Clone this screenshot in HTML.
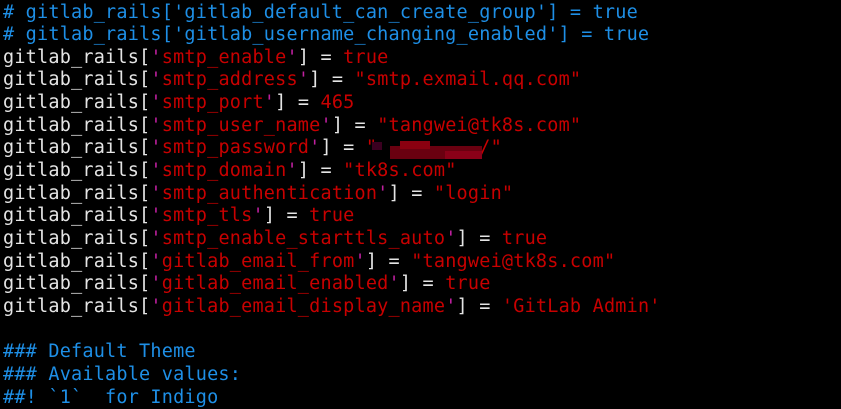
<!DOCTYPE html>
<html><head><meta charset="utf-8"><style>
body{margin:0;background:#000;width:841px;height:405px;overflow:hidden;position:relative}
pre{margin:0;position:absolute;left:3px;top:1.5px;font-family:"DejaVu Sans Mono","Liberation Mono",monospace;font-size:18.5px;letter-spacing:0.2px;line-height:22.65px;color:#e5e5e5}
.c{color:#1e8fe6}.s{color:#c80000}.q{color:#c020a0}
.b{position:absolute;background:#6a0010}
</style></head><body>
<pre><span class="c"># gitlab_rails['gitlab_default_can_create_group'] = true
# gitlab_rails['gitlab_username_changing_enabled'] = true</span>
gitlab_rails[<span class="q">'</span><span class="s">smtp_enable</span><span class="q">'</span>] = <span class="s">true</span>
gitlab_rails[<span class="q">'</span><span class="s">smtp_address</span><span class="q">'</span>] = <span class="s">"smtp.exmail.qq.com"</span>
gitlab_rails[<span class="q">'</span><span class="s">smtp_port</span><span class="q">'</span>] = <span class="s">465</span>
gitlab_rails[<span class="q">'</span><span class="s">smtp_user_name</span><span class="q">'</span>] = <span class="s">"tangwei@tk8s.com"</span>
gitlab_rails[<span class="q">'</span><span class="s">smtp_password</span><span class="q">'</span>] = <span class="s">"         /"</span>
gitlab_rails[<span class="q">'</span><span class="s">smtp_domain</span><span class="q">'</span>] = <span class="s">"tk8s.com"</span>
gitlab_rails[<span class="q">'</span><span class="s">smtp_authentication</span><span class="q">'</span>] = <span class="s">"login"</span>
gitlab_rails[<span class="q">'</span><span class="s">smtp_tls</span><span class="q">'</span>] = <span class="s">true</span>
gitlab_rails[<span class="q">'</span><span class="s">smtp_enable_starttls_auto</span><span class="q">'</span>] = <span class="s">true</span>
gitlab_rails[<span class="q">'</span><span class="s">gitlab_email_from</span><span class="q">'</span>] = <span class="s">"tangwei@tk8s.com"</span>
gitlab_rails[<span class="q">'</span><span class="s">gitlab_email_enabled</span><span class="q">'</span>] = <span class="s">true</span>
gitlab_rails[<span class="q">'</span><span class="s">gitlab_email_display_name</span><span class="q">'</span>] = <span class="s">'GitLab Admin'</span>

<span class="c">### Default Theme
### Available values:
##! `1`  for Indigo</span></pre>
<div class="b" style="left:372px;top:142px;width:10px;height:8px;background:#3a0020"></div>
<div class="b" style="left:390px;top:146px;width:92px;height:13px"></div>
<div class="b" style="left:400px;top:141px;width:30px;height:8px;background:#8a0010"></div>
<div class="b" style="left:445px;top:151px;width:37px;height:8px;background:#8a0018"></div>
</body></html>
